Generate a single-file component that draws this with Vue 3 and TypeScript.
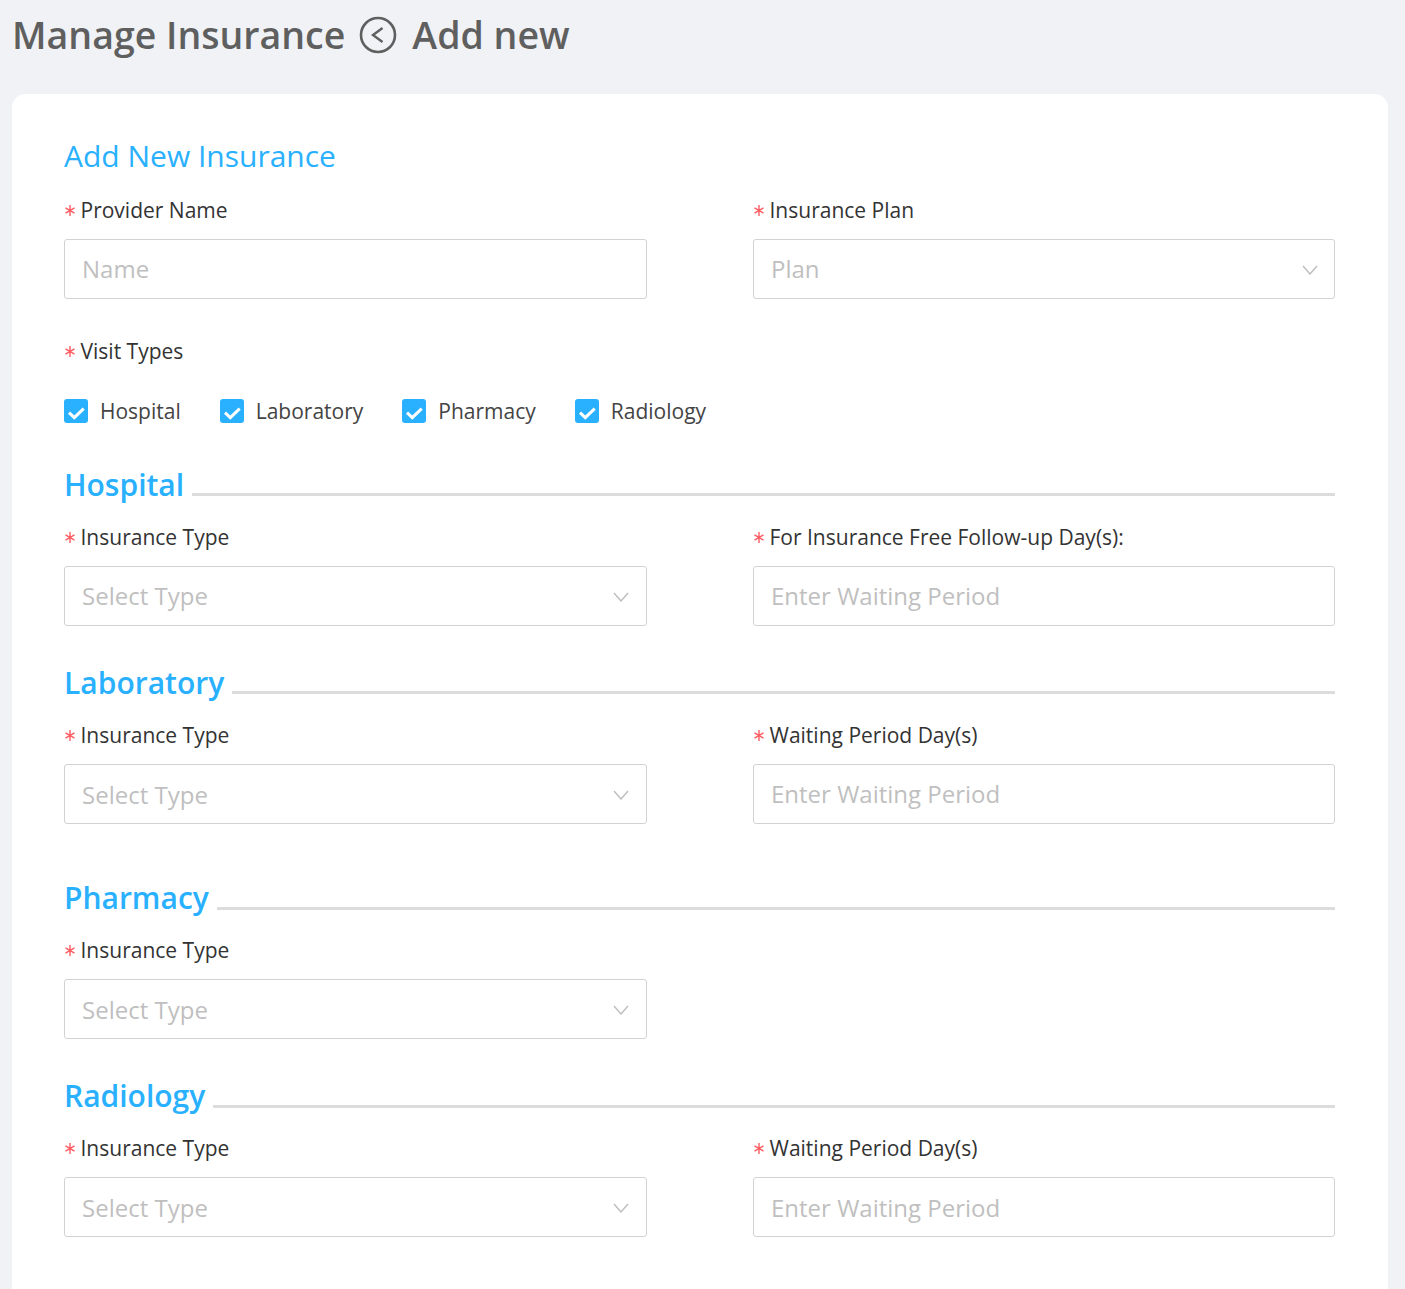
<template>
  <div class="page">
    <div class="page-header">
      <h1>Manage Insurance</h1>
      <svg class="back-icon" width="38" height="38" viewBox="0 0 38 38" fill="none">
        <circle cx="19" cy="19" r="17" stroke="#5f5f5f" stroke-width="2.6" />
        <path d="M23.5 12 14 19l9.500 7" stroke="#5f5f5f" stroke-width="2.4" />
      </svg>
      <h1>Add new</h1>
    </div>

    <div class="card">
      <h2 class="card-title">Add New Insurance</h2>

      <div class="form-row">
        <div class="field">
          <label class="req"><Star />Provider Name</label>
          <div class="input">Name</div>
        </div>
        <div class="field">
          <label class="req"><Star />Insurance Plan</label>
          <div class="input select">
            Plan
            <svg class="chevron" width="16" height="10" viewBox="0 0 16 10" fill="none"><path d="M1 1l7 8 7-8" stroke="#bdbdbd" stroke-width="1.4" /></svg>
          </div>
        </div>
      </div>

      <label class="req visit-label"><Star />Visit Types</label>
      <div class="checks">
        <div v-for="t in visitTypes" :key="t" class="check">
          <span class="box">
            <svg width="24" height="24" viewBox="0 0 24 24" fill="none"><path d="M5 13.700l5.300 5 9.400-9" stroke="#fff" stroke-width="3" /></svg>
          </span>
          {{ t }}
        </div>
      </div>

      <div v-for="s in sections" :key="s.name" class="section" :class="s.cls">
        <div class="section-title">
          <h3>{{ s.name }}</h3>
          <div class="rule"></div>
        </div>
        <div class="form-row">
          <div class="field">
            <label class="req"><Star />Insurance Type</label>
            <div class="input select">
              Select Type
              <svg class="chevron" width="16" height="10" viewBox="0 0 16 10" fill="none"><path d="M1 1l7 8 7-8" stroke="#bdbdbd" stroke-width="1.4" /></svg>
            </div>
          </div>
          <div v-if="s.second" class="field">
            <label class="req"><Star />{{ s.second }}</label>
            <div class="input">Enter Waiting Period</div>
          </div>
        </div>
      </div>
    </div>
  </div>
</template>

<script setup lang="ts">
import { h } from 'vue'

// required marker, same six-armed asterisk on every label
const Star = () =>
  h('svg', { class: 'star', width: 10, height: 11, viewBox: '0 0 10 11', fill: 'none' }, [
    h('path', { d: 'M5 0v11M.5 2.800l9 5.400M9.500 2.800l-9 5.400', stroke: '#ff5c62', 'stroke-width': 1.4 })
  ])

const visitTypes = ['Hospital', 'Laboratory', 'Pharmacy', 'Radiology']

const sections = [
  { name: 'Hospital', cls: 'sec-hospital', second: 'For Insurance Free Follow-up Day(s):' },
  { name: 'Laboratory', cls: 'sec-lab', second: 'Waiting Period Day(s)' },
  { name: 'Pharmacy', cls: 'sec-pharmacy', second: '' },
  { name: 'Radiology', cls: 'sec-radiology', second: 'Waiting Period Day(s)' }
]
</script>

<style>
html, body { margin: 0; background: #f0f2f6; }
.star { display: inline-block; margin: 0 5.5px 0 1px; vertical-align: 2px; }
</style>

<style scoped>
.page {
  height: 1289px;
  overflow: hidden;
  padding: 0 17px 0 12px;
  box-sizing: border-box;
  font-family: "Open Sans", sans-serif;
  background: #f0f2f6;
}
.page-header { display: flex; align-items: center; height: 94px; padding-bottom: 25px; box-sizing: border-box; }
.page-header h1 { margin: 0; font-size: 37.5px; line-height: 52px; font-weight: 600; color: #5f5f5f; }
.back-icon { margin: 0 15px 0 14px; }

.card { background: #fff; border-radius: 14px 14px 0 0; padding: 40px 53px 60px 52px; height: 1300px; box-sizing: border-box; }
.card-title { margin: 0 0 18px; font-size: 30px; line-height: 44px; font-weight: 400; color: #29b0ff; }

.form-row { display: grid; grid-template-columns: 583px 582px; column-gap: 106px; }
.field label { display: block; margin-bottom: 14px; }
.req { font-size: 21px; line-height: 29px; color: #333; }

.input {
  position: relative;
  height: 60px;
  box-sizing: border-box;
  border: 1px solid #d2d2d2;
  border-radius: 3px;
  padding: 0 17px 2px;
  display: flex;
  align-items: center;
  font-size: 24px;
  color: #bfbfbf;
}
.chevron { position: absolute; right: 17px; top: 25px; }
.field:nth-child(2) .chevron { right: 16px; }

.visit-label { display: block; margin-top: 38px; }
.checks { display: flex; gap: 39px; margin-top: 30px; height: 30px; }
.check { display: flex; align-items: center; gap: 12px; font-size: 21px; color: #444; }
.box { width: 24px; height: 24px; border-radius: 3px; background: #29b0ff; display: block; }
.box svg { display: block; }

.section-title { display: flex; align-items: flex-end; gap: 8px; margin-bottom: 16px; }
.section-title h3 { margin: 0; font-size: 30px; line-height: 44px; font-weight: 600; color: #29b0ff; }
.rule { flex: 1; height: 3px; background: #dcdcdc; margin-bottom: 11px; }

.sec-hospital { margin-top: 37px; }
.sec-lab { margin-top: 35px; }
.sec-pharmacy { margin-top: 52px; }
.sec-radiology { margin-top: 35px; }
.sec-pharmacy .rule, .sec-radiology .rule { margin-bottom: 10px; }
.sec-pharmacy .input, .sec-radiology .input, .sec-lab .select { padding-bottom: 0; }
</style>
